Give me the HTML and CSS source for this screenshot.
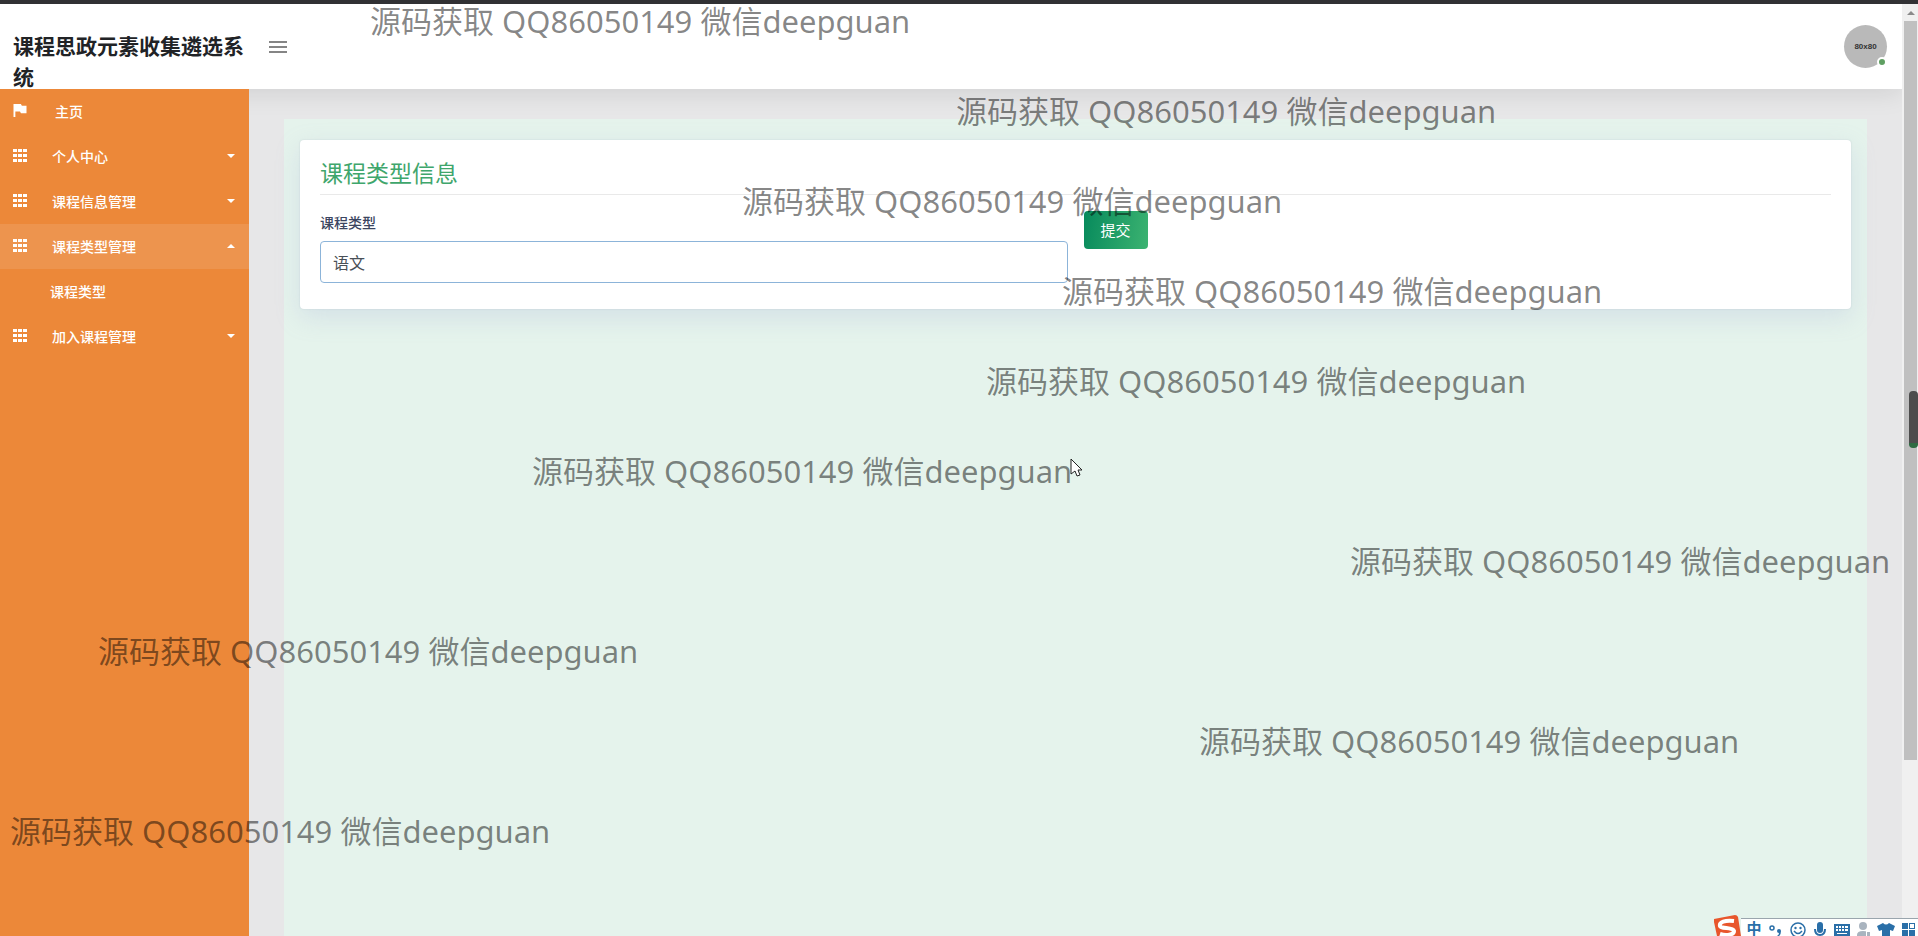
FILE: index.html
```html
<!DOCTYPE html>
<html lang="zh-CN">
<head>
    <meta charset="UTF-8">
    <meta name="viewport" content="width=device-width, initial-scale=1.0">
    <title>课程思政元素收集遴选系统</title>
    <link rel="stylesheet" href="styles.css">
</head>
<body>

<svg class="sprite" aria-hidden="true">
    <symbol id="icon-grid" viewBox="0 0 14 13">
        <path d="M0 0h4v3H0zM5 0h4v3H5zM10 0h4v3h-4zM0 5h4v3H0zM5 5h4v3H5zM10 5h4v3h-4zM0 10h4v3H0zM5 10h4v3H5zM10 10h4v3h-4z"/>
    </symbol>
</svg>

<div class="window">
    <div class="app">
        <header class="header">
            <h1 class="brand">课程思政元素收集遴选系统</h1>
            <button class="menu-toggle" type="button" aria-label="菜单">
                <span></span><span></span><span></span>
            </button>
            <div class="avatar">80x80<i class="status"></i></div>
        </header>

        <div class="main">
            <nav class="sidebar">
                <a href="#" class="nav-item home">
                    <svg class="nav-icon" viewBox="0 0 14 14"><path d="M0 0h8l1 2h5v8H8L7 8H2v6H0z"/></svg>
                    <span>主页</span>
                </a>
                <a href="#" class="nav-item">
                    <svg class="nav-icon"><use href="#icon-grid"/></svg>
                    <span>个人中心</span><i class="caret"></i>
                </a>
                <a href="#" class="nav-item">
                    <svg class="nav-icon"><use href="#icon-grid"/></svg>
                    <span>课程信息管理</span><i class="caret"></i>
                </a>
                <a href="#" class="nav-item active">
                    <svg class="nav-icon"><use href="#icon-grid"/></svg>
                    <span>课程类型管理</span><i class="caret up"></i>
                </a>
                <a href="#" class="nav-item sub">课程类型</a>
                <a href="#" class="nav-item">
                    <svg class="nav-icon"><use href="#icon-grid"/></svg>
                    <span>加入课程管理</span><i class="caret"></i>
                </a>
            </nav>

            <main class="content">
                <div class="panel">
                    <section class="card">
                        <h2 class="card-title">课程类型信息</h2>
                        <form class="type-form">
                            <div class="field">
                                <label for="courseType">课程类型</label>
                                <input type="text" id="courseType" value="语文">
                            </div>
                            <button class="btn-submit" type="button">提交</button>
                        </form>
                    </section>
                </div>
            </main>
        </div>
    </div>

    <div class="scrollbar">
        <i class="scroll-arrow"></i>
        <div class="scroll-thumb"></div>
    </div>
</div>

<div class="watermarks" aria-hidden="true">
    <span class="wm wm-1">源码获取 QQ86050149 微信deepguan</span>
    <span class="wm wm-2">源码获取 QQ86050149 微信deepguan</span>
    <span class="wm wm-3">源码获取 QQ86050149 微信deepguan</span>
    <span class="wm wm-4">源码获取 QQ86050149 微信deepguan</span>
    <span class="wm wm-5">源码获取 QQ86050149 微信deepguan</span>
    <span class="wm wm-6">源码获取 QQ86050149 微信deepguan</span>
    <span class="wm wm-7">源码获取 QQ86050149 微信deepguan</span>
    <span class="wm wm-8">源码获取 QQ86050149 微信deepguan</span>
    <span class="wm wm-9">源码获取 QQ86050149 微信deepguan</span>
    <span class="wm wm-10">源码获取 QQ86050149 微信deepguan</span>
</div>

<div class="edge-handle"></div>

<svg class="cursor" viewBox="0 0 13 20" aria-hidden="true">
    <path d="M1 1v15l4-3 2 5 3-1-2-5h4z" fill="#fff" stroke="#222" stroke-width="1"/>
</svg>

<!-- 输入法工具条 -->
<div class="ime">
    <svg class="ime-logo" viewBox="0 0 28 22">
        <path d="M1 5L22 1q2 0 3 2l3 19H4L1 8z" fill="#e8562c"/>
        <path d="M21 7C12 6 6 8 7 12c1 3 13 1 14 5 0 4-8 5-14 3" fill="none" stroke="#fff" stroke-width="4"/>
    </svg>
    <div class="ime-bar">
        <span class="ime-text">中</span>
        <svg viewBox="0 0 18 18"><circle cx="5" cy="7" r="2" fill="none" stroke="#2a6fa8" stroke-width="1.5"/><path d="M10 10a2 2 0 1 1 4 0q0 4-3 6l-1-1q2-1 2-3-2 0-2-2"/></svg>
        <svg viewBox="0 0 18 18"><circle cx="9" cy="9" r="7" fill="none" stroke="#2a6fa8" stroke-width="1.5"/><circle cx="6.5" cy="7" r="1.2"/><circle cx="11.5" cy="7" r="1.2"/><path d="M5 10q4 5 8 0" fill="none" stroke="#2a6fa8" stroke-width="1.5"/></svg>
        <svg viewBox="0 0 18 18"><rect x="6" y="1" width="6" height="11" rx="3"/><path d="M4 8q0 6 5 6t5-6M9 14v3" fill="none" stroke="#2a6fa8" stroke-width="2"/></svg>
        <svg viewBox="0 0 18 18"><path fill-rule="evenodd" d="M1 3h16v12H1zM3 5v2h2V5zM6 5v2h2V5zM9 5v2h2V5zM12 5v2h3V5zM3 8v2h2V8zM6 8v2h2V8zM9 8v2h2V8zM12 8v2h3V8zM4 12v1h10v-1z"/></svg>
        <svg class="muted" viewBox="0 0 18 18"><circle cx="8" cy="5" r="4"/><path d="M2 17v-3q0-4 6-4t6 4v3z"/><path d="M11 10h5v7h-5z" fill="#fff"/><path d="M12 11h3v5h-3z"/></svg>
        <svg viewBox="0 0 18 18"><path d="M6 2q3 3 6 0l6 3-2 5-3-1v8H5V9l-3 1-2-5z"/></svg>
        <svg viewBox="0 0 18 18"><path fill-rule="evenodd" d="M3 2h6v6H3zM10 2h6v6h-6zM11 3v4h4V3zM3 9h6v6H3zM10 9h6v6h-6z"/></svg>
    </div>
</div>

</body>
</html>
```

FILE: styles.css
```css
* {
    box-sizing: border-box;
}
body {
    margin: 0;
    font-family: "Noto Sans", "Noto Sans CJK SC", sans-serif;
    background-color: #e7e7e8;
    overflow: hidden;
}
.sprite {
    position: absolute;
    width: 0;
    height: 0;
}
.window {
    display: flex;
    min-height: 100vh;
    border-top: 4px solid #333336;
}
.app {
    flex: 1;
    display: flex;
    flex-direction: column;
    min-width: 0;
}

/* header */
.header {
    display: flex;
    align-items: center;
    height: 85px;
    padding-right: 15px;
    background-color: #fff;
    box-shadow: 0 4px 24px rgba(0, 0, 0, 0.1);
}
.brand {
    align-self: flex-start;
    width: 249px;
    margin: 0;
    padding: 27px 0 0 13px;
    font-size: 21px;
    line-height: 31px;
    font-weight: 700;
    color: #212326;
}
.menu-toggle {
    display: flex;
    flex-direction: column;
    gap: 3px;
    margin-left: 20px;
    padding: 0;
    border: none;
    background: none;
    cursor: pointer;
}
.menu-toggle span {
    width: 18px;
    height: 2px;
    background-color: #858585;
}
.avatar {
    position: relative;
    width: 43px;
    height: 43px;
    margin-left: auto;
    border-radius: 50%;
    background-color: #b9b9b9;
    color: #333;
    font-family: "Liberation Sans", Arial, sans-serif;
    font-size: 8px;
    font-weight: 700;
    line-height: 43px;
    text-align: center;
}
.status {
    position: absolute;
    right: 0;
    bottom: 1px;
    width: 10px;
    height: 10px;
    border: 2px solid #fff;
    border-radius: 50%;
    background-color: #5f9f62;
}

/* sidebar */
.main {
    flex: 1;
    display: flex;
}
.sidebar {
    position: relative;
    width: 249px;
    background-color: #ec8839;
}
.nav-item {
    display: flex;
    align-items: center;
    height: 45px;
    padding: 0 14px 2px 13px;
    color: #fff;
    font-size: 14px;
    font-weight: 500;
    text-decoration: none;
}
.nav-item.active {
    background-color: #ed944e;
}
.nav-item.sub {
    padding-left: 50px;
}
.nav-icon {
    width: 14px;
    height: 13px;
    margin-right: 25px;
    fill: #fff;
}
.home .nav-icon {
    margin-right: 28px;
}
.caret {
    margin-left: auto;
    border: 4px solid transparent;
    border-top-color: #fff;
    border-bottom: none;
}
.caret.up {
    border-top: none;
    border-bottom: 4px solid #fff;
}

/* content */
.content {
    flex: 1;
    display: flex;
    padding: 30px 35px 0;
}
.panel {
    flex: 1;
    padding: 21px 16px;
    background-color: #e5f3ec;
}
.card {
    padding: 20px 20px 26px;
    border-radius: 4px;
    background-color: #fff;
    box-shadow: 0 8px 24px rgba(160, 170, 215, 0.25), 0 0 2px rgba(100, 120, 150, 0.2);
}
.card-title {
    margin: 0 0 16px;
    padding-bottom: 8px;
    border-bottom: 1px solid #e9e9e9;
    color: #3fa66c;
    font-size: 23px;
    font-weight: 400;
    line-height: 26px;
}
.type-form {
    display: grid;
    grid-template-columns: 1fr 1fr;
    gap: 16px;
    align-items: start;
}
.field label {
    display: block;
    margin-bottom: 6px;
    color: #3b4560;
    font-size: 14px;
    font-weight: 500;
    line-height: 24px;
}
.field input {
    display: block;
    width: 100%;
    height: 42px;
    padding: 0 12px;
    border: 1px solid #8cb4d9;
    border-radius: 4px;
    background-color: #fff;
    color: #495057;
    font-family: inherit;
    font-size: 16px;
}
.btn-submit {
    justify-self: start;
    height: 38px;
    padding: 0 17px 2px;
    border: none;
    border-radius: 4px;
    background: linear-gradient(100deg, #078a5c, #3cb371);
    color: #fff;
    font-family: inherit;
    font-size: 15px;
    cursor: pointer;
}

/* scrollbar */
.scrollbar {
    width: 16px;
    padding: 0 1px 0 2px;
    background-color: #f0f0f0;
}
.scroll-arrow {
    display: block;
    width: 13px;
    height: 17px;
    border: solid transparent;
    border-width: 7px 3px 6px;
}
.scroll-arrow::before {
    content: "";
    display: block;
    border: 4px solid transparent;
    border-top: none;
    border-bottom-color: #8a8a8a;
}
.scroll-thumb {
    height: 79vh;
    background-color: #c0c0c0;
}
.edge-handle {
    position: absolute;
    top: 391px;
    right: 0;
    width: 9px;
    height: 57px;
    border-radius: 4px;
    border-bottom: 5px solid #2f6b42;
    background-color: #4c4c4c;
}

/* watermarks */
.watermarks {
    position: absolute;
    inset: 0;
    overflow: hidden;
    pointer-events: none;
}
.wm {
    position: absolute;
    color: rgba(0, 0, 0, 0.48);
    font-size: 31px;
    font-weight: 400;
    line-height: 40px;
    white-space: nowrap;
}
.wm-1 { left: 370px; top: 1px; }
.wm-2 { left: 956px; top: 91px; }
.wm-3 { left: 742px; top: 181px; }
.wm-4 { left: 1062px; top: 271px; }
.wm-5 { left: 986px; top: 361px; }
.wm-6 { left: 532px; top: 451px; }
.wm-7 { left: 1350px; top: 541px; }
.wm-8 { left: 98px; top: 631px; }
.wm-9 { left: 1199px; top: 721px; }
.wm-10 { left: 10px; top: 811px; }

.cursor {
    position: absolute;
    left: 1070px;
    top: 458px;
    width: 13px;
    height: 20px;
}

/* input method bar */
.ime {
    position: fixed;
    right: 0;
    bottom: 0;
    display: flex;
    align-items: flex-end;
    height: 22px;
}
.ime-logo {
    width: 28px;
    height: 22px;
}
.ime-bar {
    display: flex;
    gap: 4px;
    height: 18px;
    padding: 2px 1px 0 4px;
    border-top: 1px solid #9aa5ad;
    background-color: #fff;
    overflow: hidden;
}
.ime-bar svg {
    flex: none;
    width: 18px;
    height: 18px;
    fill: #2a6fa8;
}
.ime-bar .muted {
    fill: #a9b4bf;
}
.ime-text {
    width: 18px;
    color: #2a6fa8;
    font-size: 15px;
    font-weight: 700;
    line-height: 15px;
    text-align: center;
}
```
